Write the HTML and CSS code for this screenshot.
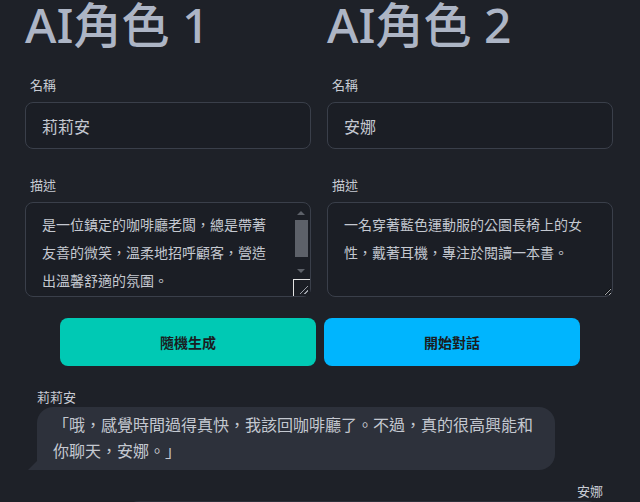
FILE: index.html
```html
<!DOCTYPE html>
<html lang="zh-Hant">
<head>
  <meta charset="UTF-8" />
  <meta name="viewport" content="width=device-width, initial-scale=1.0"/>
  <title>AI 角色對話</title>
  <link rel="stylesheet" href="styles.css">
</head>
<body>
  <div class="app">
    <div class="characters">
      <section class="character">
        <h1>AI角色 1</h1>
        <div class="field">
          <label for="name1">名稱</label>
          <input id="name1" type="text" value="莉莉安">
        </div>
        <div class="field">
          <label for="desc1">描述</label>
          <div class="textarea-wrap has-scroll">
            <textarea id="desc1">是一位鎮定的咖啡廳老闆，總是帶著友善的微笑，溫柔地招呼顧客，營造出溫馨舒適的氛圍。</textarea>
            <span class="sb-up"></span>
            <span class="sb-thumb"></span>
            <span class="sb-down"></span>
            <span class="sb-corner"></span>
          </div>
        </div>
      </section>

      <section class="character">
        <h1>AI角色 2</h1>
        <div class="field">
          <label for="name2">名稱</label>
          <input id="name2" type="text" value="安娜">
        </div>
        <div class="field">
          <label for="desc2">描述</label>
          <div class="textarea-wrap">
            <textarea id="desc2">一名穿著藍色運動服的公園長椅上的女性，戴著耳機，專注於閱讀一本書。</textarea>
          </div>
        </div>
      </section>
    </div>

    <div class="actions">
      <button class="btn btn-random">隨機生成</button>
      <button class="btn btn-start">開始對話</button>
    </div>

    <div class="chat">
      <div class="message left">
        <div class="speaker">莉莉安</div>
        <div class="bubble">「哦，感覺時間過得真快，我該回咖啡廳了。不過，真的很高興能和你聊天，安娜。」</div>
      </div>
      <div class="message right">
        <div class="speaker">安娜</div>
        <div class="bubble">「我也很開心認識你，莉莉安。有空我一定會去你的咖啡廳！」</div>
      </div>
    </div>
  </div>
</body>
</html>
```

FILE: styles.css
```css
html {
  overflow: hidden;
}
body {
  margin: 0;
  background-color: #1e2128;
  color: #c4c8d0;
  font-family: "Noto Sans", "Noto Sans CJK TC", sans-serif;
}
.app {
  padding: 0 27px 0 25px;
}
.characters {
  display: grid;
  grid-template-columns: 1fr 1fr;
  gap: 16px;
}
.character h1 {
  margin: -3px 0 0 0;
  font-size: 48px;
  line-height: 56px;
  font-weight: 500;
  color: #adb5c5;
}
.field {
  margin-top: 27px;
}
.character h1 + .field {
  margin-top: 23px;
}
.field label {
  display: block;
  margin: 0 0 8px 5px;
  font-size: 13px;
  line-height: 18px;
  color: #c8ccd4;
}
.field input,
.field textarea {
  display: block;
  width: 100%;
  box-sizing: border-box;
  background-color: #1b1e25;
  border: 1px solid #3a3f4a;
  border-radius: 8px;
  color: #c4c8d0;
  font-family: inherit;
  color-scheme: dark;
  outline: none;
}
.field input {
  height: 47px;
  padding: 0 16px;
  font-size: 16px;
}
.field textarea {
  height: 95px;
  padding: 8px 18px 8px 16px;
  font-size: 14px;
  line-height: 28px;
  overflow: hidden;
}

/* description box with its own scrollbar drawn on top */
.textarea-wrap {
  position: relative;
}
.has-scroll textarea {
  padding-right: 33px;
}
.sb-up,
.sb-down {
  position: absolute;
  left: 272px;
  width: 0;
  height: 0;
  border-left: 4px solid transparent;
  border-right: 4px solid transparent;
}
.sb-up {
  top: 9px;
  border-bottom: 4px solid #5d6169;
}
.sb-down {
  top: 67px;
  border-top: 4px solid #5d6169;
}
.sb-thumb {
  position: absolute;
  left: 270px;
  top: 18px;
  width: 13px;
  height: 37px;
  background-color: #5d6169;
}
.sb-corner {
  position: absolute;
  left: 268px;
  top: 77px;
  width: 17px;
  height: 17px;
  box-sizing: border-box;
  border-top: 1px solid #e4e4e4;
  border-left: 1px solid #e4e4e4;
  background-color: #1b1e25;
}
.sb-corner::after {
  content: "";
  position: absolute;
  right: 2px;
  bottom: 2px;
  width: 8px;
  height: 8px;
  background: linear-gradient(135deg, transparent 45%, #9a9ea6 45%, #9a9ea6 55%, transparent 55%, transparent 75%, #9a9ea6 75%, #9a9ea6 85%, transparent 85%);
}

.actions {
  display: flex;
  justify-content: center;
  gap: 8px;
  margin: 21px 0 0 2px;
}
.btn {
  width: 256px;
  height: 48px;
  border: none;
  border-radius: 8px;
  color: #1a1d22;
  font-family: inherit;
  font-size: 14px;
  font-weight: 600;
}
.btn-random {
  background-color: #00c9b4;
}
.btn-start {
  background-color: #00b5fe;
}
.chat {
  margin-top: 22px;
  padding: 0 10px 0 12px;
}
.message {
  display: flex;
  flex-direction: column;
  margin-bottom: 12px;
}
.message.left {
  align-items: flex-start;
}
.message.right {
  align-items: flex-end;
}
.speaker {
  font-size: 13px;
  line-height: 18px;
  margin-bottom: 1px;
  color: #c8ccd4;
}
.bubble {
  position: relative;
  max-width: 486px;
  padding: 6px 16px;
  background-color: #2d313b;
  font-size: 16px;
  line-height: 25.5px;
  color: #c4c8d0;
}
.left .bubble {
  border-radius: 16px 16px 16px 0;
}
.right .bubble {
  border-radius: 16px 16px 0 16px;
}
.bubble::before {
  content: "";
  position: absolute;
  bottom: 0;
  width: 10px;
  height: 10px;
  background-color: #2d313b;
}
.left .bubble::before {
  left: -9px;
  clip-path: polygon(100% 0, 100% 100%, 0 100%);
}
.right .bubble::before {
  right: -9px;
  clip-path: polygon(0 0, 100% 100%, 0 100%);
}
```
